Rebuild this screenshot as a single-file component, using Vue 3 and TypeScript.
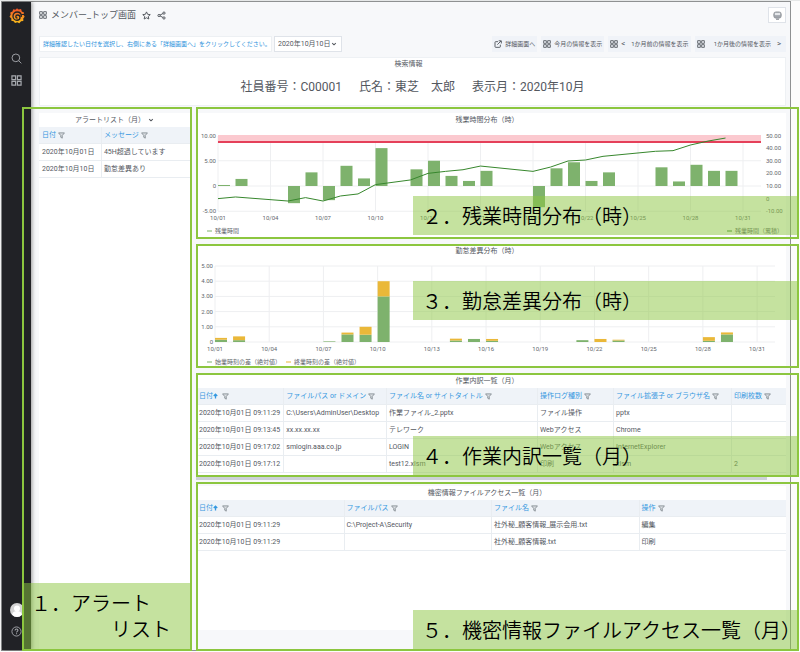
<script setup lang="ts">
import { ref } from 'vue'

interface Column {
  label: string
  width: number
  sorted?: boolean
}
interface StackedBar {
  day: number
  start: number
  end: number
}
type Point = [day: number, value: number]

const selectedDate = ref('2020年10月10日')
const tickDays = [1, 4, 7, 10, 13, 16, 19, 22, 25, 28, 31]
const dayLabel = (day: number) => `10/${String(day).padStart(2, '0')}`

// Overtime chart geometry
const otX = (day: number) => 22 + (day - 1) * 17.5
const otY = (hours: number) => 59 - hours * 5.05
const sumY = (hours: number) => 59 - (hours - 10) * 1.262
const overtime: Point[] = [
  [1, 0.2], [2, 1.4], [5, -3.4], [6, 2.7], [7, -2.8], [8, 4], [9, 1.5], [10, 7.5],
  [12, 3.3], [13, 5], [14, 2], [15, 1], [16, 3], [19, -4.2], [20, 3.5], [21, 4.7],
  [22, 1], [23, 2.7], [26, 3.7], [27, 0.9], [28, 4.2], [29, 3], [30, 3],
]
const cumulative: Point[] = [
  [1, 0], [2, 1.3], [5, -1.9], [6, 0.8], [7, -1.9], [8, 2.1], [9, 3.7], [10, 11.1],
  [12, 14.8], [13, 20], [14, 21.6], [15, 22.9], [16, 25.8], [19, 21.6], [20, 25],
  [21, 29.8], [22, 30.6], [23, 33.5], [26, 37.5], [27, 38], [28, 42.5], [29, 45.6], [30, 48],
]
const cumulativePoints = cumulative.map(([d, v]) => `${otX(d)},${sumY(v)}`).join(' ')
const otTicks = [
  { value: 10, label: '10.00' },
  { value: 5, label: '5.00' },
  { value: 0, label: '0' },
  { value: -5, label: '-5.00' },
]
const sumTicks = [
  { value: 50, label: '50.00' },
  { value: 40, label: '40.00' },
  { value: 30, label: '30.00' },
  { value: 20, label: '20.00' },
  { value: 10, label: '10.00' },
  { value: 0, label: '0' },
  { value: -10, label: '-10.00' },
]

// Attendance difference chart geometry
const diffX = (day: number) => 19 + (day - 1) * 18.07
const diffY = (hours: number) => 84 - hours * 15.2
const diffTicks = [5, 4, 3, 2, 1, 0]
const diffBars: StackedBar[] = [
  { day: 1, start: 0.15, end: 0.12 },
  { day: 2, start: 0.12, end: 0.25 },
  { day: 7, start: 0.04, end: 0 },
  { day: 8, start: 0.5, end: 0.12 },
  { day: 9, start: 0.48, end: 0.52 },
  { day: 10, start: 3, end: 1 },
  { day: 14, start: 0.1, end: 0.12 },
  { day: 15, start: 0.2, end: 0 },
  { day: 16, start: 0.08, end: 0.12 },
  { day: 21, start: 0.12, end: 0 },
  { day: 22, start: 0, end: 0.2 },
  { day: 23, start: 0.1, end: 0.05 },
  { day: 28, start: 0.08, end: 0.24 },
  { day: 29, start: 0.5, end: 0.13 },
]

const alertColumns: Column[] = [
  { label: '日付', width: 41 },
  { label: 'メッセージ', width: 59 },
]
const alertRows = [
  ['2020年10月01日', '45H超過しています'],
  ['2020年10月10日', '勤怠差異あり'],
]

const workColumns: Column[] = [
  { label: '日付', width: 14.8, sorted: true },
  { label: 'ファイルパス or ドメイン', width: 17.4 },
  { label: 'ファイル名 or サイトタイトル', width: 25.6 },
  { label: '操作ログ種別', width: 12.9 },
  { label: 'ファイル拡張子 or ブラウザ名', width: 20 },
  { label: '印刷枚数', width: 9.3 },
]
const workRows = [
  ['2020年10月01日 09:11:29', 'C:\\Users\\AdminUser\\Desktop', '作業ファイル_2.pptx', 'ファイル操作', 'pptx', ''],
  ['2020年10月01日 09:13:45', 'xx.xx.xx.xx', 'テレワーク', 'Webアクセス', 'Chrome', ''],
  ['2020年10月01日 09:17:02', 'smlogin.aaa.co.jp', 'LOGIN', 'Webアクセス', 'InternetExplorer', ''],
  ['2020年10月01日 09:17:12', '', 'test12.xlsm', '印刷', 'xlsm', '2'],
]

const secretColumns: Column[] = [
  { label: '日付', width: 25, sorted: true },
  { label: 'ファイルパス', width: 25 },
  { label: 'ファイル名', width: 25 },
  { label: '操作', width: 25 },
]
const secretRows = [
  ['2020年10月01日 09:11:29', 'C:\\Project-A\\Security', '社外秘_顧客情報_展示会用.txt', '編集'],
  ['2020年10月10日 09:11:29', '', '社外秘_顧客情報.txt', '印刷'],
]
</script>

<template>
  <svg class="defs" aria-hidden="true">
    <defs>
      <linearGradient id="flame" x1="0" y1="0" x2="0" y2="1">
        <stop offset="0" stop-color="#ef4e28" />
        <stop offset="1" stop-color="#fbc01a" />
      </linearGradient>
      <symbol id="i-grid" viewBox="0 0 12 12">
        <path d="M1 1h4v4H1zM7 1h4v4H7zM1 7h4v4H1zM7 7h4v4H7z" fill="none" stroke="currentColor" stroke-width="1.3" />
      </symbol>
      <symbol id="i-funnel" viewBox="0 0 12 12">
        <path d="M1 1.500h10L7.300 6v4.500L4.700 9V6z" fill="#d9dde2" stroke="currentColor" stroke-width="1.600" stroke-linejoin="round" />
      </symbol>
      <symbol id="i-up" viewBox="0 0 10 12">
        <path d="M5 11V2M1.500 6 5 2.500 8.500 6" fill="none" stroke="currentColor" stroke-width="2.600" />
      </symbol>
      <symbol id="i-caret" viewBox="0 0 10 10">
        <path d="M2 3.500 5 6.500l3-3" fill="none" stroke="currentColor" stroke-width="1.700" />
      </symbol>
    </defs>
  </svg>

  <div class="shell">
    <nav class="sidebar">
      <a href="#" class="logo" aria-label="ホーム">
        <svg viewBox="0 0 24 24">
          <path d="M12 1l2.400 2.100 3.700-.7 1.100 3.500 3.300 1.500-.7 3.300L23.500 14l-2.100 2.600.1 3.500-3.400.7L15.500 23.500 12.400 22 9 23.300l-2-2.800-3.500-.5.100-3.400L.8 14l1.700-3.100-.6-3.400L5.200 6l1.100-3.400 3.400.6z" fill="url(#flame)" />
          <path d="M18.500 13.200c0-4-2.900-6.400-6.200-6.400-3.700 0-6.300 2.900-6.300 6.300 0 3.600 2.800 6 5.900 6 2.500 0 4.600-1.700 4.600-4.100 0-2.200-1.600-3.700-3.500-3.700-1.600 0-2.800 1.100-2.800 2.500 0 1.100.8 1.900 1.800 1.900" fill="none" stroke="#212226" stroke-width="2" stroke-linecap="round" />
          <path d="M18.500 10.500h5" stroke="#212226" stroke-width="1.500" />
        </svg>
      </a>
      <a href="#" aria-label="検索">
        <svg viewBox="0 0 12 12"><circle cx="5.300" cy="5.300" r="4.200" fill="none" stroke="currentColor" /><path d="M8.400 8.400 11.300 11.300" stroke="currentColor" /></svg>
      </a>
      <a href="#" aria-label="ダッシュボード"><svg><use href="#i-grid" /></svg></a>
      <a href="#" class="avatar" aria-label="アカウント">
        <svg viewBox="0 0 14 14"><circle cx="7" cy="7" r="7" fill="#d4d4d4" /><circle cx="7" cy="5.400" r="3" fill="#fff" /><path d="M2 11.500c.8-2.600 2.600-3.500 5-3.500s4.200.9 5 3.500C10.600 13.200 9 14 7 14s-3.600-.8-5-2.500z" fill="#fff" /></svg>
      </a>
      <a href="#" aria-label="ヘルプ">
        <svg viewBox="0 0 12 12"><circle cx="6" cy="6" r="5" fill="none" stroke="currentColor" /><path d="M4.400 4.900c0-1 .7-1.600 1.600-1.600s1.600.6 1.600 1.400c0 1.100-1.500 1.200-1.500 2.300M6.100 8v1.100" fill="none" stroke="currentColor" stroke-width="1.100" /></svg>
      </a>
    </nav>

    <div class="content">
      <header class="header">
        <svg class="ico"><use href="#i-grid" /></svg>
        <h1>メンバー_トップ画面</h1>
        <button type="button" aria-label="お気に入り">
          <svg class="ico-l" viewBox="0 0 12 12"><path d="M6 1.200 7.500 4.400l3.500.4-2.600 2.400.7 3.500L6 9l-3.100 1.700.7-3.500L1 4.800l3.500-.4z" fill="none" stroke="currentColor" stroke-width="1.300" stroke-linejoin="round" /></svg>
        </button>
        <button type="button" aria-label="共有">
          <svg class="ico-l" viewBox="0 0 12 12"><path d="M9 2.800 3 6l6 3.200" fill="none" stroke="currentColor" stroke-width="1.300" /><g fill="#f7f8fa" stroke="currentColor" stroke-width="1.300"><circle cx="9.300" cy="2.800" r="1.500" /><circle cx="2.700" cy="6" r="1.500" /><circle cx="9.300" cy="9.300" r="1.500" /></g></svg>
        </button>
        <button type="button" class="display-mode" aria-label="表示モード">
          <svg class="ico-l" viewBox="0 0 12 12"><rect x="1" y="1.200" width="10" height="8.300" rx="3" fill="#a3a7ad" stroke="#8d9197" /><path d="M2.500 2.500h7v3h-7z" fill="#e6e8eb" /><path d="M4 11h4" stroke="#8d9197" stroke-width="1.500" /></svg>
        </button>
      </header>

      <div class="controls">
        <label for="date" class="hint">詳細確認したい日付を選択し、右側にある「詳細画面へ」をクリックしてください。</label>
        <div class="picker">
          <select id="date" v-model="selectedDate">
            <option>2020年10月01日</option>
            <option>2020年10月10日</option>
          </select>
          <svg class="caret"><use href="#i-caret" /></svg>
        </div>
        <div class="links">
          <a href="#">
            <svg class="ico" viewBox="0 0 12 12"><path d="M6 2.500H2.500a1 1 0 0 0-1 1v6.500a1 1 0 0 0 1 1H8.500a1 1 0 0 0 1-1V7M5 7l5.500-5.500M7 1.200h4v4" fill="none" stroke="currentColor" stroke-width="1.400" /></svg>
            <span>詳細画面へ</span>
          </a>
          <a href="#"><svg class="ico"><use href="#i-grid" /></svg><span>今月の情報を表示</span></a>
          <a href="#"><svg class="ico"><use href="#i-grid" /></svg><span class="arrow">&lt;</span><span>1か月前の情報を表示</span></a>
          <a href="#"><svg class="ico next"><use href="#i-grid" /></svg><span>1か月後の情報を表示</span><span class="arrow">&gt;</span></a>
        </div>
      </div>

      <section class="summary">
        <h2>検索情報</h2>
        <p><span>社員番号：C00001</span><span>氏名：東芝　太郎</span><span>表示月：2020年10月</span></p>
      </section>

      <main class="board">
        <section class="framed alerts">
          <div class="panel">
            <h2>アラートリスト（月）<svg class="caret"><use href="#i-caret" /></svg></h2>
            <table>
              <colgroup><col v-for="c in alertColumns" :key="c.label" :style="{ width: c.width + '%' }" /></colgroup>
              <thead>
                <tr>
                  <th v-for="c in alertColumns" :key="c.label" scope="col">{{ c.label }}<button type="button" aria-label="絞り込み"><svg class="funnel"><use href="#i-funnel" /></svg></button></th>
                </tr>
              </thead>
              <tbody>
                <tr v-for="(row, r) in alertRows" :key="r"><td v-for="(cell, i) in row" :key="i">{{ cell }}</td></tr>
              </tbody>
            </table>
          </div>
          <p class="tag"><span>１．アラート</span><span class="second">リスト</span></p>
        </section>

        <div class="stack">
          <section class="framed overtime">
            <div class="panel">
              <h2>残業時間分布（時）</h2>
              <svg class="chart" viewBox="0 0 590 112">
                <g class="grid">
                  <path v-for="t in otTicks" :key="t.label" :d="`M22 ${otY(t.value)}H565`" />
                  <path v-for="d in tickDays" :key="d" :d="`M${otX(d)} 9V84`" />
                </g>
                <rect class="limit-zone" x="22" y="8" width="543" height="8" />
                <rect class="limit" x="22" y="14" width="543" height="2" />
                <rect v-for="[d, v] in overtime" :key="d" class="green" :x="otX(d)" :y="Math.min(otY(v), 59)" width="12" :height="Math.abs(v) * 5.05" />
                <polyline class="trend" :points="cumulativePoints" />
                <g class="end"><text v-for="t in otTicks" :key="t.label" x="20" :y="otY(t.value) + 2">{{ t.label }}</text></g>
                <text v-for="t in sumTicks" :key="t.label" x="570" :y="sumY(t.value) + 2">{{ t.label }}</text>
                <g class="mid"><text v-for="d in tickDays" :key="d" :x="otX(d)" y="93">{{ dayLabel(d) }}</text></g>
                <path class="key-green" d="M11 104h5" />
                <text class="key" x="19" y="106">残業時間</text>
                <path class="key-dark" d="M531 104h5" />
                <text class="key" x="539" y="106">残業時間（累積）</text>
              </svg>
            </div>
            <p class="tag">２．残業時間分布（時）</p>
          </section>

          <section class="framed difference">
            <div class="panel">
              <h2>勤怠差異分布（時）</h2>
              <svg class="chart" viewBox="0 0 590 110">
                <g class="grid">
                  <path v-for="t in diffTicks" :key="t" :d="`M19 ${diffY(t)}H579`" />
                  <path v-for="d in tickDays" :key="d" :d="`M${diffX(d)} 8V84`" />
                </g>
                <g v-for="b in diffBars" :key="b.day">
                  <rect class="green" :x="diffX(b.day)" :y="diffY(b.start)" width="12" :height="b.start * 15.2" />
                  <rect class="yellow" :x="diffX(b.day)" :y="diffY(b.start + b.end)" width="12" :height="b.end * 15.2" />
                </g>
                <g class="end"><text v-for="t in diffTicks" :key="t" x="17" :y="diffY(t) + 2">{{ t ? t.toFixed(2) : '0' }}</text></g>
                <g class="mid"><text v-for="d in tickDays" :key="d" :x="diffX(d)" y="93">{{ dayLabel(d) }}</text></g>
                <path class="key-green" d="M11 104h5" />
                <text class="key" x="19" y="106">始業時刻の差（絶対値）</text>
                <path class="key-yellow" d="M90 104h5" />
                <text class="key" x="98" y="106">終業時刻の差（絶対値）</text>
              </svg>
            </div>
            <p class="tag">３．勤怠差異分布（時）</p>
          </section>

          <section class="framed work">
            <div class="panel">
              <h2>作業内訳一覧（月）</h2>
              <table>
                <colgroup><col v-for="c in workColumns" :key="c.label" :style="{ width: c.width + '%' }" /></colgroup>
                <thead>
                  <tr>
                    <th v-for="c in workColumns" :key="c.label" scope="col">{{ c.label }}<svg v-if="c.sorted" class="up"><use href="#i-up" /></svg><button type="button" aria-label="絞り込み"><svg class="funnel"><use href="#i-funnel" /></svg></button></th>
                  </tr>
                </thead>
                <tbody>
                  <tr v-for="(row, r) in workRows" :key="r"><td v-for="(cell, i) in row" :key="i">{{ cell }}</td></tr>
                </tbody>
              </table>
            </div>
            <div class="scrollbar"></div>
            <p class="tag">４．作業内訳一覧（月）</p>
          </section>

          <section class="framed secret">
            <div class="panel">
              <h2>機密情報ファイルアクセス一覧（月）</h2>
              <table>
                <colgroup><col v-for="c in secretColumns" :key="c.label" :style="{ width: c.width + '%' }" /></colgroup>
                <thead>
                  <tr>
                    <th v-for="c in secretColumns" :key="c.label" scope="col">{{ c.label }}<svg v-if="c.sorted" class="up"><use href="#i-up" /></svg><button type="button" aria-label="絞り込み"><svg class="funnel"><use href="#i-funnel" /></svg></button></th>
                  </tr>
                </thead>
                <tbody>
                  <tr v-for="(row, r) in secretRows" :key="r"><td v-for="(cell, i) in row" :key="i">{{ cell }}</td></tr>
                </tbody>
              </table>
            </div>
            <p class="tag">５．機密情報ファイルアクセス一覧（月）</p>
          </section>
        </div>
      </main>
    </div>
  </div>
</template>

<style>
body {
  background: #fcfcfc;
  border-top: 1px solid #e6e8e8;
  font-family: Roboto, 'Noto Sans CJK JP', sans-serif;
}
</style>

<style scoped>
* {
  box-sizing: border-box;
}
h1,
h2,
p {
  margin: 0;
  font-weight: 400;
}
button {
  padding: 0;
  border: 0;
  background: none;
  color: inherit;
  font: inherit;
  display: inline-flex;
}
a {
  color: inherit;
  text-decoration: none;
}
svg {
  display: block;
  flex: none;
}
.defs {
  position: absolute;
  width: 0;
  height: 0;
}
.shell {
  display: flex;
  min-height: calc(100vh - 2px);
  margin: 0 9px 0 1px;
  border: 1px solid #8f9192;
  background: #f7f8fa;
  color: #54585f;
  font-size: 7px;
  line-height: 10px;
}
.sidebar {
  display: flex;
  flex-direction: column;
  align-items: center;
  gap: 11px;
  width: 29px;
  padding: 5px 0 13px;
  background: #212226;
  color: #a6a9ae;
  box-shadow: 1px 0 4px rgba(0, 0, 0, 0.4);
}
.sidebar svg {
  width: 11px;
  height: 11px;
}
.sidebar .logo {
  margin-bottom: 18px;
}
.sidebar .logo svg {
  width: 16px;
  height: 17px;
}
.sidebar .avatar {
  margin-top: auto;
  margin-bottom: -2px;
}
.sidebar .avatar svg {
  width: 14px;
  height: 14px;
}
.content {
  display: flex;
  flex: 1;
  flex-direction: column;
  min-width: 0;
  padding: 0 4px 0 8px;
}
.header {
  display: flex;
  align-items: center;
  height: 26px;
}
.header h1 {
  margin: 0 6px 0 4px;
  font-size: 9px;
  line-height: 12px;
}
.header button {
  margin-right: 6px;
}
.ico {
  width: 8px;
  height: 8px;
}
.ico-l {
  width: 9px;
  height: 9px;
}
.header .display-mode {
  align-items: center;
  justify-content: center;
  width: 18px;
  height: 16px;
  margin: 0 0 0 auto;
  border: 1px solid #dfe3e9;
  background: #fff;
}
.controls {
  display: flex;
  gap: 2px;
  height: 16px;
  margin-top: 8px;
}
.hint {
  display: flex;
  align-items: center;
  padding: 0 0 0 3px;
  width: 233px;
  border: 1px solid #edf0f3;
  background: #fff;
  color: #2f93dc;
  font-size: 6px;
  white-space: nowrap;
}
.picker {
  display: flex;
  align-items: center;
  width: 68px;
  padding-left: 3px;
  border: 1px solid #dfe3e9;
  background: #fff;
}
.picker select {
  width: 53px;
  padding: 0;
  border: 0;
  appearance: none;
  background: none;
  color: inherit;
  font-family: inherit;
  font-size: 7px;
  line-height: 10px;
}
.caret {
  width: 6px;
  height: 6px;
}
.links {
  display: flex;
  gap: 4px;
  margin-left: auto;
  font-size: 6px;
}
.links a {
  display: flex;
  align-items: center;
  gap: 3px;
  padding: 0 2px;
  background: #f0f3f8;
  white-space: nowrap;
}
.links .arrow {
  width: 7px;
  font-size: 8px;
}
.links .arrow:last-child {
  margin-left: 3px;
}
.links .next {
  margin-right: 6px;
}
.summary {
  height: 49px;
  margin: 5px 0 1px;
  border: 1px solid #eef1f4;
  background: #fff;
  text-align: center;
}
.summary h2 {
  padding: 1px 8px 0 0;
  font-size: 7px;
  line-height: 10px;
}
.summary p {
  display: flex;
  justify-content: center;
  gap: 17px;
  padding-top: 9px;
  font-size: 12px;
  line-height: 18px;
}
.board {
  display: grid;
  grid-template-columns: 170px minmax(0, 1fr);
  flex: 1;
  gap: 4px;
  margin: 0 -13px -1px -17px;
  position: relative;
}
.stack {
  display: flex;
  flex-direction: column;
  gap: 5px;
}
.framed {
  display: flex;
  flex-direction: column;
  position: relative;
  padding-right: 13px;
}
.framed::after {
  content: '';
  position: absolute;
  inset: 0;
  border: 2px solid #8cc63f;
  pointer-events: none;
}
.alerts {
  padding: 6px 2px 0 17px;
}
.overtime {
  padding-top: 6px;
}
.secret {
  flex: 1;
  padding-top: 4px;
  padding-bottom: 21px;
}
.work .panel {
  padding-top: 1px;
  padding-bottom: 4px;
}
.panel {
  flex: 1;
  background: #fff;
}
.panel h2 {
  display: flex;
  align-items: center;
  justify-content: center;
  height: 14px;
  font-size: 7px;
  line-height: 10px;
}
.stack h2 {
  padding-right: 8px;
}
.panel h2 .caret {
  margin-left: 3px;
}
table {
  width: 100%;
  border-collapse: separate;
  border-spacing: 0;
  table-layout: fixed;
}
th,
td {
  height: 17px;
  padding: 0 3px;
  border-bottom: 1px solid #e9edf1;
  font-weight: 400;
  text-align: left;
  white-space: nowrap;
}
th {
  background: #eff3f8;
  color: #3598e0;
}
th + th,
td + td {
  padding-left: 2px;
  border-left: 1px solid #e9edf1;
}
th button {
  margin-left: 2px;
  color: #8b9299;
  vertical-align: middle;
}
.funnel {
  width: 7px;
  height: 7px;
}
.up {
  display: inline-block;
  width: 5px;
  height: 6px;
  margin-right: 2px;
  vertical-align: middle;
}
.chart {
  width: 100%;
  height: auto;
}
.chart text {
  fill: #63676e;
  font-size: 6px;
}
.end {
  text-anchor: end;
}
.mid {
  text-anchor: middle;
}
.grid path {
  stroke: #eeeff1;
}
.green {
  fill: #7eb26d;
}
.yellow {
  fill: #eab839;
}
.limit-zone {
  fill: #fbc9cf;
}
.limit {
  fill: #e5405a;
}
.trend {
  fill: none;
  stroke: #37872d;
}
.key-green {
  stroke: #7eb26d;
}
.key-dark {
  stroke: #37872d;
}
.key-yellow {
  stroke: #eab839;
}
.scrollbar {
  position: absolute;
  bottom: -3px;
  left: 0;
  right: 32px;
  height: 3px;
  background: #cdd1d8;
}
.tag {
  position: absolute;
  right: 2px;
  left: 36%;
  padding: 0 0 0 9px;
  background: rgba(140, 198, 63, 0.5);
  color: #000;
  font-family: 'Noto Sans CJK JP', sans-serif;
  font-size: 20px;
  font-weight: 350;
  line-height: 39px;
  white-space: nowrap;
}
.overtime .tag {
  bottom: 4px;
}
.difference .tag {
  top: 37px;
}
.work .tag,
.secret .tag {
  bottom: 2px;
}
.alerts .tag {
  bottom: 2px;
  left: 2px;
  display: flex;
  flex-direction: column;
  padding: 7px 0 7px 7px;
  line-height: 26px;
}
.alerts .second {
  padding-left: 80px;
}
</style>
